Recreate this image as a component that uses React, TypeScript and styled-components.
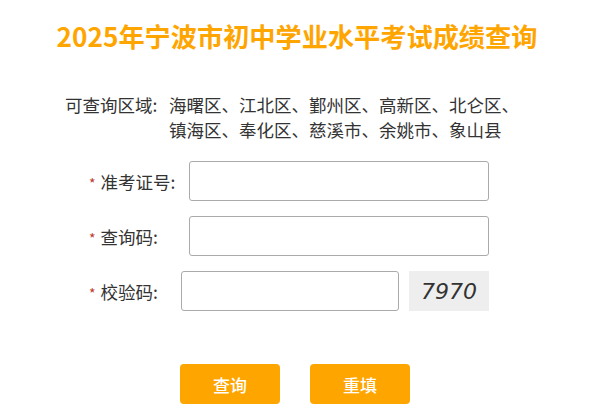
import styled, { createGlobalStyle } from 'styled-components';

const GlobalStyle = createGlobalStyle`
  body {
    margin: 0;
    background: #fff;
    font-family: "Noto Sans CJK SC", "Liberation Sans", sans-serif;
    color: #333;
  }
`;

const Page = styled.div`
  width: 594px;
  padding-top: 16px;
`;

const Title = styled.h1`
  margin: 0;
  text-align: center;
  font-size: 26.2px;
  line-height: 40px;
  font-weight: 700;
  color: #ffa500;
`;

const Region = styled.div`
  display: flex;
  margin: 36px 0 0 65px;
  font-size: 17.5px;
  line-height: 25px;
  color: #333;
`;

const RegionLabel = styled.span`
  width: 104px;
  flex-shrink: 0;
`;

const RegionList = styled.span`
  width: 350px;
`;

const Form = styled.form`
  display: flex;
  flex-direction: column;
  gap: 15px;
  margin: 19px 0 0 89px;
`;

const Row = styled.div`
  display: flex;
  align-items: center;
  height: 40px;
`;

const Label = styled.label<{ $width: number }>`
  width: ${(p) => p.$width}px;
  flex-shrink: 0;
  display: flex;
  align-items: center;
  font-size: 17.5px;
  color: #333;
`;

const Star = styled.span`
  color: #c0392b;
  font-size: 14px;
  margin-right: 5px;
  padding-top: 3px;
`;

const Input = styled.input<{ $width: number }>`
  box-sizing: border-box;
  width: ${(p) => p.$width}px;
  height: 40px;
  border: 1px solid #aaa;
  border-radius: 3px;
  padding: 0 8px;
  font-size: 16px;
  outline: none;
`;

const Captcha = styled.div`
  width: 80px;
  height: 40px;
  margin-left: 10px;
  background: #eee;
  display: flex;
  align-items: center;
  justify-content: center;
  font-family: "DejaVu Sans", sans-serif;
  font-style: italic;
  font-size: 22px;
  color: #333;
`;

const Buttons = styled.div`
  display: flex;
  justify-content: center;
  gap: 30px;
  margin-top: 53px;
  padding-right: 4px;
`;

const Button = styled.button`
  width: 100px;
  height: 40px;
  border: none;
  border-radius: 4px;
  background: #ffa500;
  color: #fff;
  font-family: "Noto Sans CJK SC", sans-serif;
  font-size: 17px;
  font-weight: 500;
  cursor: pointer;
`;

const fields = [
  { label: '准考证号:', labelWidth: 100, inputWidth: 300 },
  { label: '查询码:', labelWidth: 100, inputWidth: 300 },
];

const App = () => {
  return (
    <Page>
      <GlobalStyle />
      <Title>2025年宁波市初中学业水平考试成绩查询</Title>
      <Region>
        <RegionLabel>可查询区域:</RegionLabel>
        <RegionList>
          海曙区、江北区、鄞州区、高新区、北仑区、镇海区、奉化区、慈溪市、余姚市、象山县
        </RegionList>
      </Region>
      <Form onSubmit={(e) => e.preventDefault()}>
        {fields.map((f) => (
          <Row key={f.label}>
            <Label $width={f.labelWidth}>
              <Star>*</Star>
              {f.label}
            </Label>
            <Input $width={f.inputWidth} />
          </Row>
        ))}
        <Row>
          <Label $width={92}>
            <Star>*</Star>
            校验码:
          </Label>
          <Input $width={218} />
          <Captcha>7970</Captcha>
        </Row>
      </Form>
      <Buttons>
        <Button type="button">查询</Button>
        <Button type="button">重填</Button>
      </Buttons>
    </Page>
  );
};

export default App;
